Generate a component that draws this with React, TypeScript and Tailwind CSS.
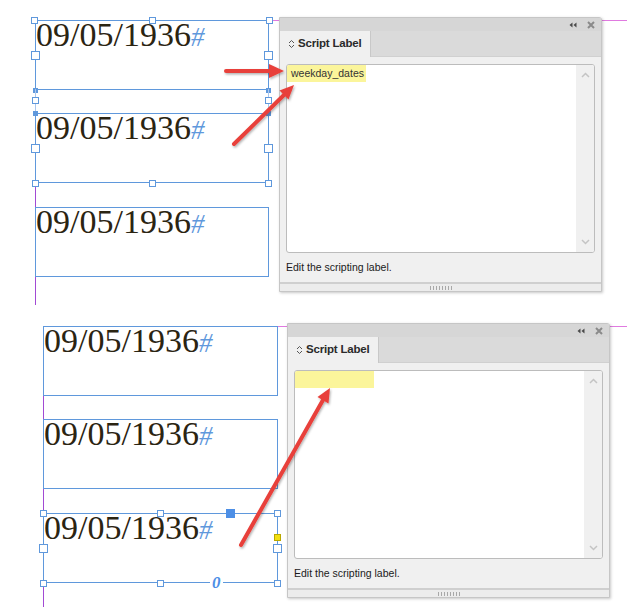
import React from "react";

const serif = { fontFamily: '"Liberation Serif", "Times New Roman", serif' };

const DateText = () => (
  <div className="flex items-baseline leading-[27px] select-none" style={serif}>
    <span className="text-[34px] text-[#2b2412]">09/05/1936</span>
    <span className="text-[27px] italic text-[#5f98dc]">#</span>
  </div>
);

// handle looks
const hollow = "w-[7px] h-[7px] bg-white border border-[#5f98dc]";
const big = "w-[9px] h-[9px] bg-white border border-[#5f98dc]";
const dot = "w-[5px] h-[5px] bg-[#5f98dc]";

// a row of handles laid along one edge of the frame
const Edge = ({ at, children }: { at: string; children: React.ReactNode }) => (
  <div className={`absolute -left-[5px] -right-[5px] h-0 flex items-center justify-between ${at}`}>{children}</div>
);

const Frame = ({ children }: { children?: React.ReactNode }) => (
  <div className="relative h-[70px] border border-[#5f98dc]">
    <DateText />
    {children}
  </div>
);

const ChevronPair = () => (
  <svg width="7" height="10" viewBox="0 0 7 10" className="shrink-0">
    <path d="M1 4 L3.5 1.5 L6 4" fill="none" stroke="#555" strokeWidth="1" />
    <path d="M1 6 L3.5 8.5 L6 6" fill="none" stroke="#555" strokeWidth="1" />
  </svg>
);

const ScriptPanel = ({ label, className }: { label?: string; className: string }) => (
  <div
    className={`relative z-10 w-[323px] h-[275px] flex flex-col border border-[#c6c6c6] rounded-tr-[3px] bg-[#f0f0f0] shadow-[1px_1px_3px_rgba(0,0,0,0.22)] ${className}`}
    style={{ fontFamily: '"Liberation Sans", Arial, sans-serif' }}
  >
    <div className="h-[13px] bg-[#d6d6d6] flex items-center justify-end gap-[10px] pr-[6px]">
      <svg width="8" height="6" viewBox="0 0 8 6">
        <path d="M3.5 0.5 L0.5 3 L3.5 5.5 Z" fill="#4a4a4a" />
        <path d="M7.5 0.5 L4.5 3 L7.5 5.5 Z" fill="#4a4a4a" />
      </svg>
      <svg width="8" height="8" viewBox="0 0 8 8">
        <path d="M1 1 L7 7 M7 1 L1 7" stroke="#8a8a8a" strokeWidth="2" />
      </svg>
    </div>
    <div className="h-[26px] bg-[#dadada] flex border-b border-[#d0d0d0]">
      <div className="w-[91px] bg-[#f0f0f0] border-r border-[#c8c8c8] flex items-center gap-[3px] pl-[8px] -mb-px">
        <ChevronPair />
        <span className="text-[11.5px] font-bold text-[#2a2a2a] tracking-[-0.2px]">Script Label</span>
      </div>
    </div>
    <div className="flex-1 flex flex-col px-[6px] pt-[7px]">
      <div className="h-[189px] flex border border-[#bcbcbc] rounded-[3px] bg-white overflow-hidden">
        <div className="flex-1 flex items-start">
          <div className="w-[79px] h-[17px] bg-[#fbf59b] flex items-center pl-[4px]">
            {label ? <span className="text-[10.5px] text-[#333]">{label}</span> : null}
          </div>
        </div>
        <div className="w-[18px] bg-[#f0f0f0] flex flex-col items-center justify-between py-[7px]">
          <svg width="9" height="6" viewBox="0 0 9 6">
            <path d="M1 5 L4.5 1.5 L8 5" fill="none" stroke="#c4c4c4" strokeWidth="1.5" />
          </svg>
          <svg width="9" height="6" viewBox="0 0 9 6">
            <path d="M1 1 L4.5 4.5 L8 1" fill="none" stroke="#c4c4c4" strokeWidth="1.5" />
          </svg>
        </div>
      </div>
      <div className="flex-1 flex items-center text-[10.5px] text-[#1a1a1a]">Edit the scripting label.</div>
    </div>
    <div className="h-[9px] border-t-2 border-[#cfcfcf] bg-[#ececec] flex items-center justify-center">
      <div className="flex gap-[2px]">
        {Array.from({ length: 8 }).map((_, i) => (
          <div key={i} className="w-px h-[4px] bg-[#a8a8a8]" />
        ))}
      </div>
    </div>
  </div>
);

const Arrows = () => (
  <svg className="absolute inset-0 pointer-events-none z-20" width="627" height="607" viewBox="0 0 627 607">
    <defs>
      <filter id="sh" x="-20%" y="-20%" width="140%" height="140%">
        <feDropShadow dx="1" dy="1.5" stdDeviation="1.2" floodColor="#000" floodOpacity="0.3" />
      </filter>
    </defs>
    <g filter="url(#sh)" fill="#e8403a" stroke="#e8403a">
      <line x1="226" y1="71" x2="271" y2="71" strokeWidth="4" strokeLinecap="round" />
      <polygon points="284,71 269,64 269,78" stroke="none" />
      <line x1="234" y1="144" x2="285" y2="94" strokeWidth="4" strokeLinecap="round" />
      <polygon points="294,85 288.5,99.5 279.5,90.5" stroke="none" />
      <line x1="241" y1="545" x2="323" y2="400" strokeWidth="4" strokeLinecap="round" />
      <polygon points="330,388 328.5,403.5 317.5,397" stroke="none" />
    </g>
  </svg>
);

export default function App() {
  return (
    <div className="relative w-[627px] h-[607px] overflow-hidden bg-white">
      {/* top shot */}
      <div className="relative h-[310px] flex items-start">
        {/* guides */}
        <div className="absolute left-[268px] right-0 top-[20px] h-px bg-[#e07ae0]" />
        <div className="absolute left-[35px] top-[182px] bottom-[5px] w-px bg-[#a24ad4]" />

        <div className="relative z-10 ml-[35px] mt-[20px] w-[234px] flex flex-col gap-[23px]">
          <Frame>
            <Edge at="top-[-1px]">
              <div className={hollow} />
              <div className={hollow} />
              <div className={hollow} />
            </Edge>
            <Edge at="top-1/2">
              <div className={big} />
              <div className={big} />
            </Edge>
            <Edge at="bottom-[-1px]">
              <div className={`${dot} ml-[2px]`} />
              <div className={`${dot} mr-[2px]`} />
            </Edge>
            {/* group bounds between the two frames */}
            <div className="absolute -left-px -right-px top-[68px] h-[24px] flex justify-between">
              <div className="w-px bg-[#a9c6ee]" />
              <div className="w-px bg-[#a9c6ee]" />
            </div>
            <Edge at="top-[79px]">
              <div className={`${hollow} ml-px`} />
              <div className={`${hollow} mr-px`} />
            </Edge>
          </Frame>
          <Frame>
            <Edge at="top-[-1px]">
              <div className={`${dot} ml-[2px]`} />
              <div className={`${dot} mr-[2px]`} />
            </Edge>
            <Edge at="top-1/2">
              <div className={big} />
              <div className={big} />
            </Edge>
            <Edge at="bottom-[-1px]">
              <div className={`${hollow} ml-px`} />
              <div className={hollow} />
              <div className={`${hollow} mr-px`} />
            </Edge>
          </Frame>
          <div className="mt-px">
            <Frame />
          </div>
        </div>
        <ScriptPanel label="weekday_dates" className="ml-[10px] mt-[17px]" />
      </div>

      {/* bottom shot */}
      <div className="relative h-[297px] flex items-start">
        <div className="absolute left-[277px] right-0 top-[16px] h-px bg-[#e07ae0]" />
        <div className="absolute left-[43px] top-[85px] bottom-0 w-px bg-[#a24ad4]" />

        <div className="relative z-10 ml-[43px] mt-[16px] w-[235px] flex flex-col gap-[23px]">
          <Frame />
          <Frame />
          <div className="mt-px">
            <Frame>
              <Edge at="top-[-1px]">
                <div className={`${hollow} ml-px`} />
                <div className={hollow} />
                <div className={`${hollow} mr-px`} />
              </Edge>
              <Edge at="top-1/2">
                <div className={big} />
                <div className={big} />
              </Edge>
              <Edge at="bottom-[-1px]">
                <div className={`${hollow} ml-px`} />
                <div className={hollow} />
                <div className={`${hollow} mr-px`} />
              </Edge>
              {/* reference point, corner option and overflow markers */}
              <div className="absolute left-[182px] -top-[5px] w-[9px] h-[9px] bg-[#4d8fe6]" />
              <div className="absolute -right-[4px] top-[20px] w-[7px] h-[7px] bg-[#f2df12] border border-[#b9a800]" />
              <div
                className="absolute left-[166px] -bottom-[9px] px-[2px] bg-white text-[17px] leading-[17px] italic font-bold text-[#4d8fe6]"
                style={serif}
              >
                0
              </div>
            </Frame>
          </div>
        </div>
        <ScriptPanel className="ml-[9px] mt-[13px]" />
      </div>

      <Arrows />
    </div>
  );
}
